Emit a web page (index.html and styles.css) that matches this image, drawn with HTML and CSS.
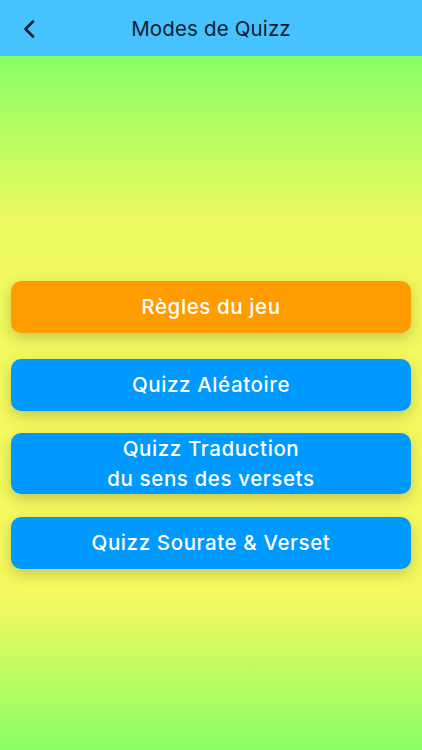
FILE: index.html
```html
<!DOCTYPE html>
<html lang="fr">
<head>
    <meta charset="UTF-8">
    <meta name="viewport" content="width=device-width, initial-scale=1.0">
    <title>Modes de Quizz</title>
    <link rel="stylesheet" href="styles.css">
</head>
<body>
    <header class="nav-bar">
        <button class="back-btn" aria-label="Retour">
            <svg width="14" height="20" viewBox="0 0 14 20">
                <path d="M11 2.5 L3.5 10 L11 17.5" fill="none" stroke="#14202b" stroke-width="2.6" stroke-linecap="round" stroke-linejoin="round"/>
            </svg>
        </button>
        <h1 class="nav-title">Modes de Quizz</h1>
    </header>

    <main class="content">
        <div class="mode-list">
            <button class="mode-btn rules">Règles du jeu</button>
            <button class="mode-btn random">Quizz Aléatoire</button>
            <button class="mode-btn two-lines">Quizz Traduction<br>du sens des versets</button>
            <button class="mode-btn">Quizz Sourate &amp; Verset</button>
        </div>
    </main>
</body>
</html>
```

FILE: styles.css
```css
body {
    margin: 0;
    padding: 0;
    width: 422px;
    height: 750px;
    display: flex;
    flex-direction: column;
    font-family: Inter, "Noto Sans", sans-serif;
    overflow: hidden;
}

.nav-bar {
    height: 56px;
    flex-shrink: 0;
    background-color: #45c2ff;
    display: flex;
    align-items: center;
    justify-content: center;
    position: relative;
}

.back-btn {
    position: absolute;
    left: 22px;
    top: 19px;
    background: none;
    border: none;
    padding: 0;
    width: 14px;
    height: 20px;
    cursor: pointer;
}

.back-btn svg {
    display: block;
}

.nav-title {
    margin: 0;
    font-size: 20.5px;
    font-weight: 400;
    color: #14202b;
    letter-spacing: 0.15px;
}

.content {
    flex: 1;
    background: linear-gradient(#88ff66 0%, #eefa5e 24%, #f4f95e 50%, #f4f95e 78%, #88ff66 100%);
    padding: 225px 11px 0;
}

.mode-list {
    display: flex;
    flex-direction: column;
}

.mode-btn {
    width: 100%;
    height: 52px;
    border: none;
    border-radius: 10px;
    background-color: #0099ff;
    color: #fff;
    font-family: Inter, "Noto Sans", sans-serif;
    font-size: 20.5px;
    font-weight: 500;
    letter-spacing: 0.6px;
    line-height: 30px;
    padding: 0;
    cursor: pointer;
    box-shadow: 0 5px 14px rgba(90, 90, 40, 0.3);
    margin-bottom: 22px;
}

.mode-btn.rules {
    background-color: #ff9c00;
    margin-bottom: 26px;
}

.mode-btn.two-lines {
    height: 61px;
    line-height: 30px;
    margin-bottom: 23px;
}
```
